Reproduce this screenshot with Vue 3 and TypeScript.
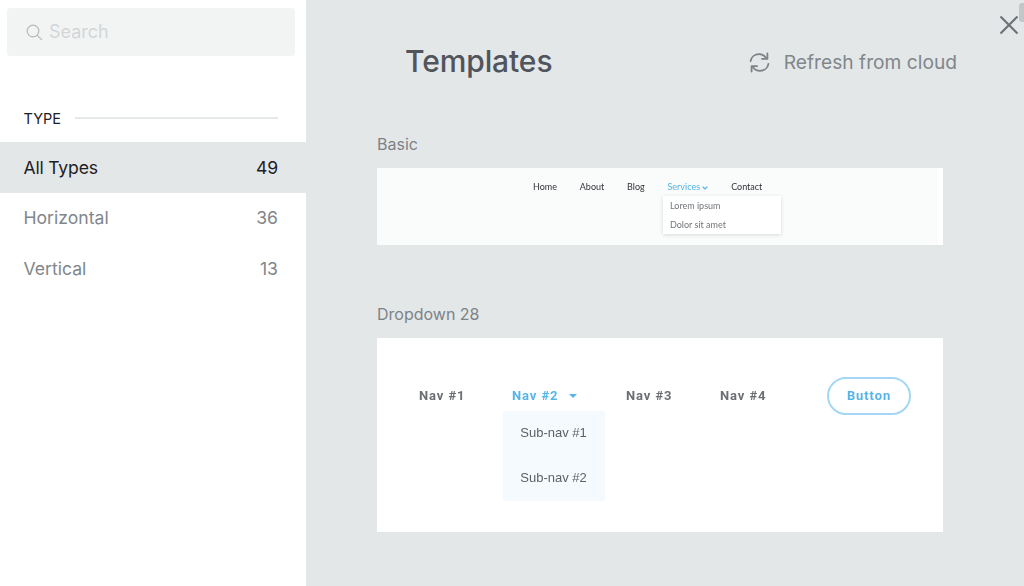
<script setup lang="ts">
interface TypeRow { name: string; count: number; active?: boolean }
const rows: TypeRow[] = [
  { name: 'All Types', count: 49, active: true },
  { name: 'Horizontal', count: 36 },
  { name: 'Vertical', count: 13 },
]
const basicNav = ['Home', 'About', 'Blog', 'Services', 'Contact']
</script>

<template>
  <div class="page">
    <aside class="sidebar">
      <div class="search">
        <svg class="search-icon" width="17" height="17" viewBox="0 0 17 17" fill="none" stroke="#b4b9bc" stroke-width="1.2" stroke-linecap="round">
          <circle cx="7" cy="7" r="5.8" />
          <path d="M11.3 11.3 15.6 15.6" />
        </svg>
        <span class="search-text">Search</span>
      </div>
      <div class="type-head">
        <span>TYPE</span>
        <i></i>
      </div>
      <ul class="types">
        <li v-for="r in rows" :key="r.name" :class="{ active: r.active }">
          <span>{{ r.name }}</span>
          <span>{{ r.count }}</span>
        </li>
      </ul>
    </aside>

    <main class="main">
      <header class="head">
        <h1>Templates</h1>
        <div class="refresh">
          <svg width="21" height="21" viewBox="0 0 21 21" fill="none" stroke="#7d8286" stroke-width="1.8" stroke-linecap="round" stroke-linejoin="round">
            <path d="M1.6 9.2C2.3 5 5.8 2.2 10 2.2c2.9 0 5.2 1.2 7 3.6" />
            <path d="M18.4 1.4v5.4h-5.4" />
            <path d="M19.4 11.8c-.7 4.2-4.2 7-8.4 7-2.9 0-5.2-1.2-7-3.6" />
            <path d="M2.6 19.6v-5.4h5.4" />
          </svg>
          <span>Refresh from cloud</span>
        </div>
      </header>

      <section class="group basic-group">
        <h2>Basic</h2>
        <div class="card basic">
          <nav class="basic-nav">
            <span v-for="n in basicNav" :key="n" class="basic-item" :class="{ on: n === 'Services' }">
              {{ n }}
              <svg v-if="n === 'Services'" width="6" height="4" viewBox="0 0 6 4" fill="none" stroke="#4fb3ea" stroke-width="1.2">
                <path d="M.6.6 3 3 5.4.6" />
              </svg>
              <div v-if="n === 'Services'" class="basic-menu">
                <div>Lorem ipsum</div>
                <div>Dolor sit amet</div>
              </div>
            </span>
          </nav>
        </div>
      </section>

      <section class="group">
        <h2>Dropdown 28</h2>
        <div class="card drop">
          <div class="drop-nav">
            <span class="d1">Nav #1</span>
            <span class="d2 on">Nav #2
              <i class="caret"></i>
              <div class="sub">
                <div>Sub-nav #1</div>
                <div>Sub-nav #2</div>
              </div>
            </span>
            <span class="d3">Nav #3</span>
            <span class="d4">Nav #4</span>
            <span class="btn">Button</span>
          </div>
        </div>
      </section>
    </main>

    <svg class="close" width="20" height="20" viewBox="0 0 20 20" fill="none" stroke="#6d7277" stroke-width="2.2">
      <path d="M1.5 1.5 18.5 18.5M18.5 1.5 1.5 18.5" />
    </svg>
    <div class="thumb"></div>
  </div>
</template>

<style>
html, body { margin: 0; overflow: hidden; }
</style>

<style scoped>
.page {
  position: relative;
  display: flex;
  width: 1024px;
  height: 586px;
  overflow: hidden;
  background: #e4e7e8;
  font-family: Inter, "Liberation Sans", sans-serif;
}
.sidebar {
  width: 306px;
  flex: none;
  background: #fff;
  box-sizing: border-box;
  padding-top: 8px;
}
.search {
  display: flex;
  align-items: center;
  gap: 6px;
  margin: 0 11px 0 7px;
  height: 48px;
  box-sizing: border-box;
  padding-left: 19px;
  background: #f2f4f4;
  border-radius: 3px;
  color: #d2d6d8;
  font-size: 18px;
}
.search-text {
  margin-bottom: 1px;
}
.type-head {
  display: flex;
  align-items: center;
  gap: 14px;
  margin: 52px 28px 0 23.5px;
  height: 20px;
  color: #1d2126;
  font-size: 14.5px;
}
.type-head i {
  flex: 1;
  height: 2px;
  background: #e6e9ea;
}
.types {
  list-style: none;
  margin: 14px 0 0;
  padding: 0;
}
.types li {
  display: flex;
  justify-content: space-between;
  align-items: center;
  height: 51px;
  box-sizing: border-box;
  padding: 0 28px 2px 23.5px;
  color: #81868b;
  font-size: 17.6px;
}
.types li.active {
  background: #e4e7e8;
  color: #1d2126;
  padding-bottom: 0;
  letter-spacing: -.2px;
}
.main {
  flex: 1;
  min-width: 0;
  padding: 0 81px 0 71px;
}
.head {
  display: flex;
  justify-content: space-between;
  align-items: center;
  height: 122px;
  padding: 0 0 0 28px;
  margin-right: -14px;
}
h1 {
  margin: 0;
  font-size: 30px;
  font-weight: 500;
  letter-spacing: -.1px;
  color: #50545c;
}
.refresh {
  display: flex;
  align-items: center;
  gap: 14px;
  padding-top: 2px;
  color: #81868b;
  font-size: 19.2px;
}
.group h2 {
  margin: 0;
  height: 46px;
  line-height: 44px;
  font-size: 16px;
  font-weight: 400;
  color: #7d8287;
}
.basic-group {
  margin-bottom: 47px;
}
.card {
  width: 566px;
  position: relative;
}
.group .basic {
  height: 77px;
  box-sizing: border-box;
  background: #fafbfb;
  border-right: 5px solid #fff;
}
.basic-nav {
  display: flex;
  gap: 22.8px;
  padding: 13px 0 0 156px;
  font-family: Lato, sans-serif;
  font-size: 9px;
  color: #2f3338;
  filter: blur(.25px);
}
.basic-item {
  position: relative;
  line-height: 12px;
  white-space: nowrap;
}
.basic-item.on {
  color: #4fb3ea;
}
.basic-menu {
  position: absolute;
  left: -4.5px;
  top: 15px;
  width: 118px;
  height: 38px;
  background: #fff;
  box-shadow: 0 1px 4px rgba(0, 0, 0, .14);
  color: #72767b;
  padding-left: 7px;
  box-sizing: border-box;
}
.basic-menu div {
  height: 19px;
  line-height: 19px;
}
.drop {
  height: 194px;
  background: #fff;
}
.drop-nav {
  position: relative;
  height: 194px;
  font-family: Roboto, sans-serif;
  font-size: 13px;
  font-weight: 700;
  letter-spacing: .9px;
  color: #6b6f73;
  filter: blur(.3px);
}
.drop-nav > span {
  position: absolute;
  top: 50px;
  line-height: 16px;
  white-space: nowrap;
}
.d1 { left: 42px; }
.d2 { left: 135px; color: #56b4ea; }
.d3 { left: 249px; }
.d4 { left: 343px; }
.drop-nav > .btn {
  left: 450px;
  top: 39px;
  width: 84px;
  height: 38px;
  box-sizing: border-box;
  border: 2px solid #a3d7f4;
  border-radius: 19px;
  text-align: center;
  line-height: 34px;
  color: #56b4ea;
}
.caret {
  display: inline-block;
  width: 0;
  height: 0;
  margin-left: 6px;
  vertical-align: 2px;
  border-left: 4px solid transparent;
  border-right: 4px solid transparent;
  border-top: 4px solid #56b4ea;
}
.sub {
  position: absolute;
  left: -9px;
  top: 23px;
  width: 102px;
  height: 90px;
  background: #f5fafe;
  color: #5e6165;
  font-family: "Liberation Sans", sans-serif;
  font-weight: 400;
  font-size: 13px;
  letter-spacing: 0;
  text-align: center;
}
.sub div {
  height: 45px;
  line-height: 43px;
  padding-right: 1px;
}
.close {
  position: absolute;
  left: 998.5px;
  top: 14.5px;
}
.thumb {
  position: absolute;
  left: 1019px;
  top: 3px;
  width: 8px;
  height: 19px;
  border-radius: 3px;
  background: #c3c7ca;
}
</style>
